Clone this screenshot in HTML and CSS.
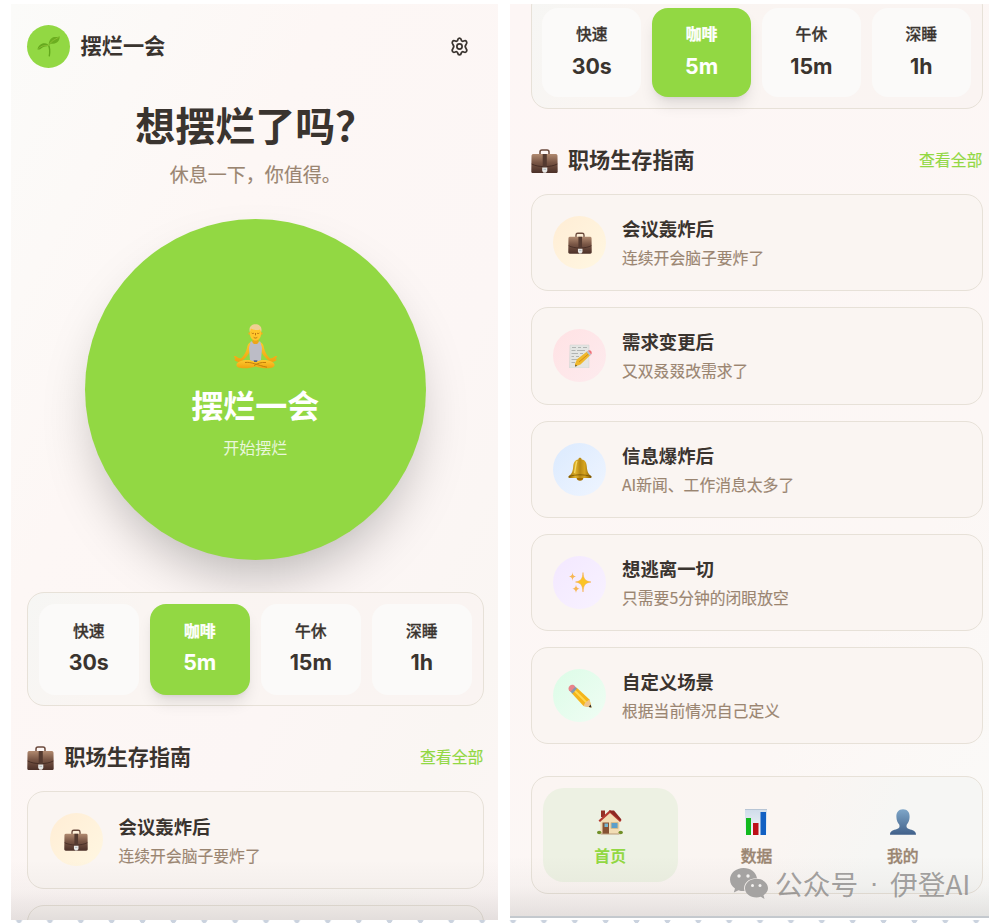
FILE: index.html
```html
<!DOCTYPE html>
<html lang="zh-CN">
<head>
<meta charset="utf-8">
<title>摆烂一会</title>
<link rel="stylesheet" href="styles.css">
</head>
<body>
<svg class="defs" width="0" height="0">
  <defs>
    <linearGradient id="gBag" x1="0" y1="0" x2="0" y2="1"><stop offset="0" stop-color="#b18a70"/><stop offset=".45" stop-color="#795645"/><stop offset="1" stop-color="#4b3028"/></linearGradient>
    <linearGradient id="gBell" x1="0" y1="0" x2="1" y2="0"><stop offset="0" stop-color="#8e6200"/><stop offset=".3" stop-color="#e3b52c"/><stop offset=".5" stop-color="#b88913"/><stop offset=".7" stop-color="#d7a51f"/><stop offset="1" stop-color="#7e5600"/></linearGradient>
    <linearGradient id="gUser" x1="0" y1="0" x2="0" y2="1"><stop offset="0" stop-color="#7ea6c8"/><stop offset="1" stop-color="#41618a"/></linearGradient>
    <linearGradient id="gSkin" x1="0" y1="0" x2="0" y2="1"><stop offset="0" stop-color="#ffc92f"/><stop offset="1" stop-color="#f0a30f"/></linearGradient>
    <linearGradient id="gChart" x1="0" y1="0" x2="0" y2="1"><stop offset="0" stop-color="#cfdcea"/><stop offset="1" stop-color="#f4f7fa"/></linearGradient>
  </defs>
  <symbol id="sprout" viewBox="0 0 24 24">
    <path d="M12.6 10.3C14 12.800 14.500 17 13.500 22.500L12.100 22.300C12.900 17.500 12.600 14 11.600 11.500Z" fill="#63a81c"/>
    <path d="M12.300 11.300C10 12 6.500 12 4.300 14.200C3 15.600 1.800 15 .5 15C1.500 11 4.500 8.500 8 8.700C10.500 8.900 11.500 10 12.300 11.300Z" fill="#65a81e"/>
    <path d="M12.300 10.500C12 6.500 14.500 2.800 18 2.200C20.500 1.800 22 2.400 23.700 1.300C23.800 5 22 8 18.500 8.900C16 9.500 14 8.800 12.300 10.500Z" fill="#6bae20"/>
    <path d="M1.500 14.200C5 11 8 10.600 12 11M13 9.500C15.500 6 18 5 22.500 2.500" stroke="#9bc93c" stroke-width=".7" fill="none"/>
  </symbol>
  <symbol id="gear" viewBox="0 0 24 24">
    <g fill="none" stroke="#3a342f" stroke-width="2.200" stroke-linecap="round" stroke-linejoin="round">
      <path d="M12 1.500C13.900 1.500 14 2.300 14.300 3.900C14.500 5 15.600 5.700 16.700 5.300C18.400 4.700 19.600 4 20.800 5.600C22 7.500 21.500 8.200 20.200 9.700C19 11.100 19 12.900 20.200 14.300C21.500 15.800 22 16.500 20.800 18.400C19.600 20 18.400 19.300 16.700 18.700C15.600 18.300 14.500 19 14.300 20.100C14 21.700 13.900 22.500 12 22.500S10 21.700 9.700 20.100C9.500 19 8.400 18.300 7.300 18.700C5.600 19.300 4.400 20 3.200 18.400C2 16.500 2.500 15.800 3.800 14.300C5 12.900 5 11.100 3.800 9.700C2.500 8.200 2 7.500 3.200 5.600C4.400 4 5.600 4.700 7.300 5.300C8.400 5.700 9.500 5 9.700 3.900C10 2.300 10.100 1.500 12 1.500Z"/>
      <circle cx="12" cy="12" r="3.300"/>
    </g>
  </symbol>
  <symbol id="yoga" viewBox="0 0 45 45">
    <path d="M18.500 18C15.500 18.500 14.500 21 14 24C13 28 11 31.500 8 34.500L5 33.700C3.500 32 1 31.600 1 32.500C1 33.500 2.500 34 2.500 35C1 35 1 36.200 2.300 36.800C5 38.500 8 38.200 9.500 36.800C13 33.500 16 30 17.500 26L27.500 26C29 30 32 33.500 35.500 36.800C37 38.200 40 38.500 42.700 36.800C44 36.200 44 35 42.500 35C42.500 34 44 33.500 44 32.500C44 31.600 41.500 32 40 33.700L37 34.500C34 31.500 32 28 31 24C30.500 21 29.500 18.500 26.500 18Z" fill="url(#gSkin)"/>
    <path d="M19.500 13H25.500V19L22.500 21.500L19.500 19Z" fill="#eda51a"/>
    <path d="M3.500 40.500C4 37.500 10 35.700 16 36C19 36.200 21 37 22.500 37.500C24 37 26 36.200 29 36C35 35.700 41 37.500 41.500 40.500C42 43.500 39 44.300 34 44.300C29 44.300 26 43.700 22.500 42.500C19 43.700 16 44.300 11 44.300C6 44.300 3 43.500 3.500 40.500Z" fill="url(#gSkin)"/>
    <path d="M12 38.500C18 37.500 25 41.500 34 43.200M33 38.500C28 38 24.500 39.500 21 41.500" stroke="#c37f09" stroke-width="1" fill="none"/>
    <path d="M17.500 17.800L19 17.200C19.500 21 25.500 21 26 17.200L27.500 17.800C27.500 21 29 22 29 24.500L28 36C25 37.700 20 37.700 17 36L16 24.500C16 22 17.500 21 17.500 17.800Z" fill="#bcbcc6"/>
    <path d="M20.500 36.300H24.500L24 38H21.200Z" fill="#56677e"/>
    <circle cx="16.700" cy="9.500" r="1.300" fill="#f4ae20"/><circle cx="28.300" cy="9.500" r="1.300" fill="#f4ae20"/>
    <path d="M17 5C17-.5 28-.5 28 5V10C28 14 25.500 16.500 22.500 16.500S17 14 17 10Z" fill="#ffc62b"/>
    <path d="M16.800 8C15.500 3 18.500 .3 22.500 .3S29.500 3 28.200 8L27 5.500C24 6.500 20 6 18 4.500Z" fill="#f0cf93"/>
    <path d="M18.700 9C19.500 9.700 20.300 9.700 21 9M24 9C24.700 9.700 25.500 9.700 26.300 9M20.700 13.300C22 14.300 23 14.300 24.300 13.300M22.500 9V11.300" stroke="#a9620c" stroke-width=".8" fill="none"/>
  </symbol>
  <symbol id="bag" viewBox="0 0 27 24">
    <path d="M9 5.500V3C9 1.500 9.500 1 11 1H16C17.500 1 18 1.500 18 3V5.500" fill="none" stroke="#6b4a3c" stroke-width="1.500"/>
    <path d="M2 5H25C26 5 26.500 6 26.500 7L26.700 22.500C26.700 23.500 26 24 25 24H2C1 24 .3 23.500 .3 22.500L.5 7C.5 6 1 5 2 5Z" fill="url(#gBag)"/>
    <path d="M.7 15C7 18.500 20 18.500 26.300 15" fill="none" stroke="#3e2720" stroke-width=".8"/>
    <path d="M11.700 5H15.800V19H11.700Z" fill="#543a30"/>
    <path d="M11.200 18.500H16.300V22L15 23.700H12.500L11.200 22Z" fill="#e8e8e6"/>
    <path d="M12.500 19.800H15V21H12.500Z" fill="#b9c0c2"/>
  </symbol>
  <symbol id="memo" viewBox="0 0 24 24">
    <path d="M2 1H21V24H1.500Z" fill="#e4e5e3" stroke="#ccd0ce" stroke-width=".5"/>
    <path d="M4 3.500H8M10 3.500H13M15 3.500H19M3.500 6.500H7.500M9 6.500H17M3.500 9.500H10M12 9.500H15M3.500 12.500H6M8 12.500H11M3.500 15.500H9M3.500 18.500H7" stroke="#a3a7a6" stroke-width=".8"/>
    <path d="M7 20L9 15.300L19.300 7.300L22.500 11L12.500 20.500L7 22.500Z" fill="#efb82c"/>
    <path d="M11 18L21 9.500" stroke="#d78c10" stroke-width="1"/>
    <path d="M18.500 8L20 6.800L23.200 10.500L21.700 11.800Z" fill="#b3c1d2"/>
    <path d="M20 6.800L21 6.300C23 6 24 8 23.700 9.500L23.200 10.500Z" fill="#ef737a"/>
    <path d="M7 22.500L7.700 20.500L9 22Z" fill="#443c34"/>
  </symbol>
  <symbol id="bell" viewBox="0 0 24 24">
    <ellipse cx="12" cy="21.300" rx="3.200" ry="2.400" fill="#a46d00"/>
    <path d="M10.300 2.500C10.300 0 13.700 0 13.700 2.500C17.500 3 18.500 6 18.800 9.500C19.200 15 20.500 17.300 23.500 19.200C24 20.500 23 21 22 21H2C1 21 0 20.500 .5 19.200C3.500 17.300 4.800 15 5.200 9.500C5.500 6 6.500 3 10.300 2.500Z" fill="url(#gBell)"/>
    <path d="M1 19.400C8 17.300 16 17.300 23 19.400" stroke="#795300" stroke-width=".8" fill="none"/>
    <path d="M9 4C7.500 8 7.500 12 6.500 16" stroke="#f6db68" stroke-width="1.200" fill="none"/>
  </symbol>
  <symbol id="sparkles" viewBox="0 0 24 24">
    <path d="M15 1.500C15.500 8 17 10 23 11C17 12 15.500 14 15 21C14.500 14 13 12 7.500 11C13 10 14.500 8 15 1.500Z" fill="#fbc426" stroke="#f4a945" stroke-width=".5"/>
    <path d="M4.500 1C4.700 4 5.500 5 8 5.500C5.500 6 4.700 7 4.500 10C4.300 7 3.500 6 1 5.500C3.500 5 4.300 4 4.500 1ZM8 13.500C8.200 16 9 17.200 11.500 17.700C9 18.200 8.200 19.500 8 22C7.800 19.500 7 18.200 4.500 17.700C7 17.200 7.800 16 8 13.500Z" fill="#f7b652"/>
  </symbol>
  <symbol id="pencil" viewBox="0 0 24 24">
    <path d="M8.500 3.500L21.500 15.500L23.500 23.500L15.500 22L3.500 9Z" fill="#f5b51b"/>
    <path d="M6.500 6.500L18.500 18.500" stroke="#ffd84e" stroke-width="1.800"/>
    <path d="M21.500 15.500L23.500 23.500L15.500 22L17 19Z" fill="#eec48e"/>
    <path d="M22.600 20.500L23.500 23.500L20.700 23Z" fill="#322d2a"/>
    <path d="M6 1.500L9 4.500L4.500 9.700L1.300 6.500Z" fill="#8598ae"/>
    <path d="M1 6.500C-.7 3 2.700-.5 6 1.200L7.300 2.700L2.500 7.700Z" fill="#e9848a"/>
  </symbol>
  <symbol id="house" viewBox="0 0 26 26">
    <path d="M4 1.500H8V8H4Z" fill="#943126"/>
    <path d="M13 3.500L22.500 12V25H3.500V12Z" fill="#f2ddb4"/>
    <path d="M13 1L24.500 11.500L23 13L13 4L3 13L1.500 11.500Z" fill="#b53a31"/>
    <path d="M12 1.500H17L24.500 10.500L23 11.500L13 3Z" fill="#8e2822"/>
    <path d="M5.500 13.500H12V25H5.500Z" fill="#865233"/>
    <path d="M7.500 14.500H11V18H7.500Z" fill="#77b6cf"/>
    <path d="M14 13.500H21V19.500H14Z" fill="#5b9fca" stroke="#d7bd8c"/>
    <ellipse cx="2.200" cy="23.500" rx="2.200" ry="1.700" fill="#718f28"/><ellipse cx="23.700" cy="23.500" rx="2.200" ry="1.700" fill="#718f28"/>
    <path d="M3.500 24.500H22.500V25.500H3.500Z" fill="#b89b79"/>
  </symbol>
  <symbol id="chart" viewBox="0 0 26 26">
    <path d="M2 0H24V26H2Z" fill="url(#gChart)"/>
    <path d="M2 .5H24" stroke="#b7c5d5"/>
    <path d="M3 9H8V26H3Z" fill="#12b91e"/><path d="M10 14H15.500V26H10Z" fill="#bd1018"/><path d="M17.500 3H23V26H17.500Z" fill="#1260c3"/>
  </symbol>
  <symbol id="user" viewBox="0 0 26 26">
    <path d="M13 .3C17.500 .3 19.800 3.500 19.600 8C19.500 11.500 18.500 13.500 16.800 15.500C16 17.500 16.500 19 19 20C22.500 21.300 26 21.500 26 25.700H0C0 21.500 3.500 21.300 7 20C9.500 19 10 17.500 9.200 15.500C7.500 13.500 6.500 11.500 6.400 8C6.200 3.500 8.500 .3 13 .3Z" fill="url(#gUser)"/>
  </symbol>
  <symbol id="wechat" viewBox="0 0 38 31">
    <path d="M13.500 0C6 0 0 5 0 11.500C0 15.300 2 18.500 5 20.500L3.800 24.500L8.500 22.200C10.500 23 13 23.200 14.500 23C12.500 15.500 18.500 10 27 10.200C26 4 20.500 0 13.500 0Z" fill="#a5a3a2"/>
    <path d="M26.500 10.800C20 10.800 15 15 15 20.300S20 29.500 26.500 29.500C28 29.500 29.500 29.300 30.800 28.800L34.500 31L33.500 27.300C36.300 25.500 38 23 38 20.300C38 15 33 10.800 26.500 10.800Z" fill="#a5a3a2"/>
    <g fill="#f4f2f1"><circle cx="9" cy="8" r="1.700"/><circle cx="18" cy="8" r="1.700"/><circle cx="22.500" cy="17.500" r="1.500"/><circle cx="30" cy="17.500" r="1.500"/></g>
  </symbol>
</svg>

<div class="stage">
  <main class="phone phone-home">
    <header class="topbar">
      <span class="logo"><svg><use href="#sprout"/></svg></span>
      <span class="brand">摆烂一会</span>
      <svg class="settings"><use href="#gear"/></svg>
    </header>
    <h1 class="headline">想摆烂了吗？</h1>
    <p class="tagline">休息一下，你值得。</p>
    <button class="start">
      <svg class="start-icon"><use href="#yoga"/></svg>
      <span class="start-title">摆烂一会</span>
      <span class="start-sub">开始摆烂</span>
    </button>
    <div class="durations">
      <div class="duration"><span class="name">快速</span><span class="value">30s</span></div>
      <div class="duration active"><span class="name">咖啡</span><span class="value">5m</span></div>
      <div class="duration"><span class="name">午休</span><span class="value">15m</span></div>
      <div class="duration"><span class="name">深睡</span><span class="value">1h</span></div>
    </div>
    <div class="section-head"><svg class="section-icon"><use href="#bag"/></svg><h2>职场生存指南</h2><a class="more">查看全部</a></div>
    <div class="scenes">
      <article class="scene"><span class="badge amber"><svg><use href="#bag"/></svg></span><div class="copy"><h3>会议轰炸后</h3><p>连续开会脑子要炸了</p></div></article>
      <article class="scene"></article>
    </div>
  </main>

  <main class="phone phone-list">
    <div class="durations">
      <div class="duration"><span class="name">快速</span><span class="value">30s</span></div>
      <div class="duration active"><span class="name">咖啡</span><span class="value">5m</span></div>
      <div class="duration"><span class="name">午休</span><span class="value">15m</span></div>
      <div class="duration"><span class="name">深睡</span><span class="value">1h</span></div>
    </div>
    <div class="section-head"><svg class="section-icon"><use href="#bag"/></svg><h2>职场生存指南</h2><a class="more">查看全部</a></div>
    <div class="scenes">
      <article class="scene"><span class="badge amber"><svg><use href="#bag"/></svg></span><div class="copy"><h3>会议轰炸后</h3><p>连续开会脑子要炸了</p></div></article>
      <article class="scene"><span class="badge rose"><svg><use href="#memo"/></svg></span><div class="copy"><h3>需求变更后</h3><p>又双叒叕改需求了</p></div></article>
      <article class="scene"><span class="badge blue"><svg><use href="#bell"/></svg></span><div class="copy"><h3>信息爆炸后</h3><p>AI新闻、工作消息太多了</p></div></article>
      <article class="scene"><span class="badge violet"><svg><use href="#sparkles"/></svg></span><div class="copy"><h3>想逃离一切</h3><p>只需要5分钟的闭眼放空</p></div></article>
      <article class="scene"><span class="badge green"><svg><use href="#pencil"/></svg></span><div class="copy"><h3>自定义场景</h3><p>根据当前情况自己定义</p></div></article>
    </div>
    <nav class="tabs">
      <a class="tab current"><svg><use href="#house"/></svg><span>首页</span></a>
      <a class="tab"><svg><use href="#chart"/></svg><span>数据</span></a>
      <a class="tab"><svg><use href="#user"/></svg><span>我的</span></a>
    </nav>
  </main>
</div>
<div class="dots"></div>
<div class="watermark"><svg><use href="#wechat"/></svg><span class="account">公众号</span><span class="sep">·</span><span>伊登AI</span></div>
</body>
</html>
```
FILE: styles.css
```css
* { box-sizing: border-box; margin: 0; padding: 0; }
body {
  position: relative;
  width: 1002px;
  height: 924px;
  overflow: hidden;
  background: #fff;
  color: #3a342f;
  font-family: "Noto Sans CJK SC", "Noto Sans", sans-serif;
}
.defs { position: absolute; }
svg { display: block; flex: none; }
.stage { display: flex; gap: 12px; padding: 4px 0 0 10.500px; }
.phone {
  --muted: #9a8571;
  position: relative;
  height: 916px;
  overflow: hidden;
  display: flex;
  flex-direction: column;
}
.phone > * { flex-shrink: 0; }
.phone::after {
  content: "";
  position: absolute;
  inset: auto 0 0;
  height: 60px;
  background: linear-gradient(rgba(60, 50, 50, 0), rgba(60, 50, 50, .03) 50%, rgba(60, 55, 55, .12));
  pointer-events: none;
}
.phone-home {
  width: 487px;
  padding: 21px 14px 0 16.500px;
  background: linear-gradient(118deg, #fbfbf9 0, #fdf7f5 33%, #fcf6f5 65%, #faf6f3 85%, #fcf6f5 100%);
}
.phone-list {
  width: 479.500px;
  height: 914px;
  padding: 0 6.500px 0 21px;
  background: linear-gradient(125deg, #fdf6f5 0, #fcf7f5 70%, #fafaf8 100%);
  border-bottom: 2px solid #c4c9ce;
}

.topbar { display: flex; align-items: center; height: 43px; }
.logo { display: grid; place-items: center; width: 43px; height: 43px; border-radius: 50%; background: #92d843; }
.logo svg { width: 23px; height: 23px; }
.brand { margin: -3px 0 0 10.500px; font-size: 21.200px; line-height: 32px; font-weight: 700; }
.settings { width: 19px; height: 19px; margin: 0 14.500px 0 auto; }
.headline { margin-top: 28px; font-size: 40px; line-height: 56px; font-weight: 700; text-align: center; white-space: nowrap; }
.tagline { margin-top: 7px; font-size: 19px; line-height: 30px; text-align: center; color: var(--muted); -webkit-text-stroke: .15px; }
.start {
  display: flex;
  flex-direction: column;
  align-items: center;
  align-self: center;
  width: 341px;
  height: 341px;
  margin-top: 30px;
  padding-top: 105px;
  border: 0;
  border-radius: 50%;
  background: #92d843;
  box-shadow: 0 27px 53px -13px rgba(0, 0, 0, .27);
  color: #fff;
  font-family: inherit;
}
.start-icon { width: 45px; height: 45px; }
.start-title { margin-top: 13px; font-size: 32px; line-height: 44px; font-weight: 700; }
.start-sub { margin-top: 9px; font-size: 16px; line-height: 24px; opacity: .8; }

.durations {
  display: grid;
  grid-template-columns: repeat(4, 1fr);
  gap: 10.600px;
  border: 1px solid #e7e1d8;
  border-radius: 17px;
  background: linear-gradient(115deg, #f6f6f4 0, #faf5f2 24%, #faf4f2 100%);
}
.phone-home .durations { height: 114px; margin-top: 32px; padding: 10.500px; }
.phone-list .durations { height: 120px; margin-top: -15px; padding: 18px 10.600px 11px; }
.duration {
  display: flex;
  flex-direction: column;
  align-items: center;
  padding-top: 15px;
  border-radius: 16px;
  background: #fbfaf9;
}
.phone-list .duration { padding-top: 14px; }
.duration.active { background: #92d843; color: #fff; box-shadow: 0 10px 16px -3px rgba(0, 0, 0, .11), 0 4px 6px -4px rgba(0, 0, 0, .1); }
.name { font-size: 15.800px; line-height: 24px; font-weight: 500; -webkit-text-stroke: .3px; }
.active .name { font-weight: 700; }
.value { margin-top: 4px; font-family: Inter, sans-serif; font-size: 21.300px; line-height: 32px; font-weight: 700; }
.phone-home .value { margin-top: 3px; }

.section-head { display: flex; align-items: center; height: 32px; margin-top: 35px; }
.section-icon { width: 27px; height: 24px; margin-top: 2px; }
.section-head h2 { margin: -3px 0 0 10.500px; font-size: 21.100px; line-height: 32px; font-weight: 600; }
.more { margin-left: auto; font-size: 15.900px; line-height: 24px; color: #92d843; -webkit-text-stroke: .15px; }
.phone-home .more, .phone-list .more { margin-top: -1px; }

.scenes { display: flex; flex-direction: column; gap: 16px; margin-top: 18px; }
.scene {
  display: flex;
  align-items: center;
  height: 97.300px;
  padding: 0 21.500px;
  border: 1px solid #e7e1d8;
  border-radius: 17px;
  background: #faf5f2;
}
.phone-home .scene { height: 98px; }
.badge { display: grid; place-items: center; width: 53px; height: 53px; border-radius: 50%; }
.phone-home .badge { margin-top: -1px; }
.badge svg { width: 24px; height: 24px; }
.amber { background: linear-gradient(135deg, #ffedd5, #fff7e2); }
.rose { background: linear-gradient(135deg, #ffe2e4, #fdebee); }
.blue { background: linear-gradient(135deg, #dbeafe, #eff5ff); }
.violet { background: linear-gradient(135deg, #f3e8ff, #f8f2ff); }
.green { background: linear-gradient(135deg, #dcfce7, #f0fdf4); }
.copy { margin: -1px 0 0 16px; }
.copy h3 { font-size: 18.400px; line-height: 28px; font-weight: 600; }
.copy p { margin-top: 4px; font-size: 15.800px; line-height: 24px; color: var(--muted); -webkit-text-stroke: .15px; }

.tabs {
  display: grid;
  grid-template-columns: repeat(3, 1fr);
  gap: 11px;
  height: 118px;
  margin-top: 32px;
  padding: 11px;
  border: 1px solid #e7e1d8;
  border-radius: 17px;
  background: linear-gradient(115deg, #fbf5f2 0, #faf5f2 55%, #f6f6f4 75%);
}
.tab { display: flex; flex-direction: column; align-items: center; padding-top: 21px; border-radius: 21px; color: var(--muted); }
.tab svg { width: 26px; height: 26px; }
.tab span { margin-top: 9px; font-size: 15.800px; line-height: 24px; font-weight: 500; -webkit-text-stroke: .35px; }
.tab.current { background: #edf1e3; color: #92d843; }
.tab.current span { font-weight: 700; -webkit-text-stroke: 0; }

.dots {
  height: 3px;
  background: radial-gradient(circle at 50% 0, #cbd3df 2.700px, transparent 3.300px) 3.600px 0 / 30.880px 6px repeat-x;
}
.watermark {
  position: absolute;
  left: 730px;
  top: 865px;
  display: flex;
  align-items: center;
  color: rgba(120, 118, 117, .68);
  font-size: 27.700px;
  font-weight: 400;
  line-height: 36px;
  white-space: nowrap;
}
.watermark svg { width: 38px; height: 31px; margin-top: 1px; }
.account { margin-left: 7px; }
.sep { width: 32px; text-align: center; font-family: "Liberation Sans", sans-serif; }
```
